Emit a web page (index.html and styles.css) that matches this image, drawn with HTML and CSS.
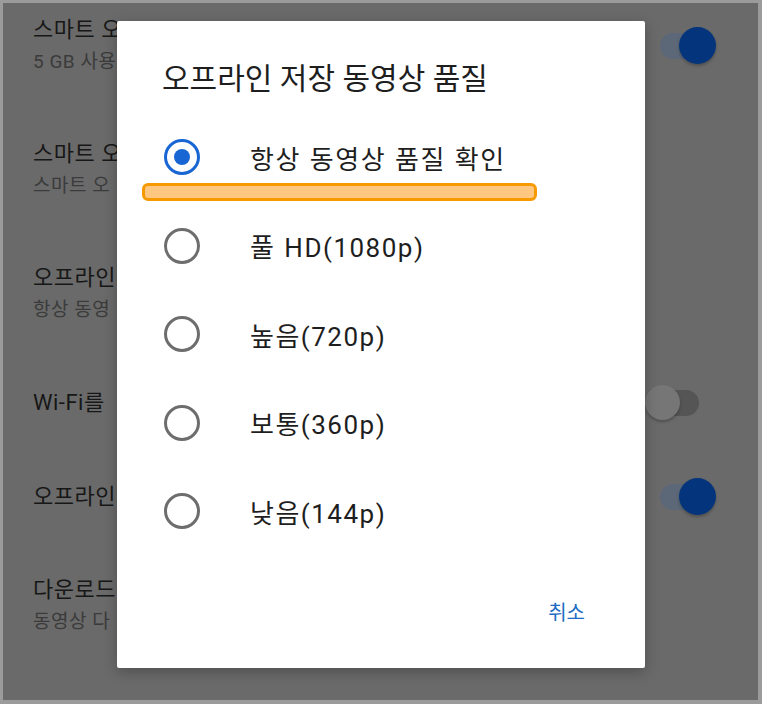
FILE: index.html
```html
<!DOCTYPE html>
<html>
<head>
  <meta charset="utf-8">
  <title>오프라인 저장 동영상 품질</title>
  <link rel="stylesheet" href="styles.css">
</head>
<body>
  <div class="screen">
    <div class="settings">
      <div class="row row-two">
        <div class="row-text">
          <div class="row-title">스마트 오</div>
          <div class="row-sub">5 GB 사용</div>
        </div>
        <div class="toggle on"><span class="knob"></span></div>
      </div>
      <div class="row row-two">
        <div class="row-text">
          <div class="row-title">스마트 오</div>
          <div class="row-sub">스마트 오</div>
        </div>
      </div>
      <div class="row row-two">
        <div class="row-text">
          <div class="row-title">오프라인</div>
          <div class="row-sub">항상 동영</div>
        </div>
      </div>
      <div class="row row-one">
        <div class="row-text">
          <div class="row-title">Wi-Fi를</div>
        </div>
        <div class="toggle off"><span class="knob"></span></div>
      </div>
      <div class="row row-one">
        <div class="row-text">
          <div class="row-title">오프라인</div>
        </div>
        <div class="toggle on"><span class="knob"></span></div>
      </div>
      <div class="row row-two">
        <div class="row-text">
          <div class="row-title">다운로드</div>
          <div class="row-sub">동영상 다</div>
        </div>
      </div>
    </div>

    <div class="dialog">
      <h2 class="dialog-title">오프라인 저장 동영상 품질</h2>
      <ul class="options">
        <li class="option selected"><span class="radio"></span><span class="label">항상 동영상 품질 확인</span></li>
        <li class="option"><span class="radio"></span><span class="label">풀 HD(1080p)</span></li>
        <li class="option"><span class="radio"></span><span class="label">높음(720p)</span></li>
        <li class="option"><span class="radio"></span><span class="label">보통(360p)</span></li>
        <li class="option"><span class="radio"></span><span class="label">낮음(144p)</span></li>
      </ul>
      <div class="actions">
        <button class="cancel">취소</button>
      </div>
      <div class="marker"></div>
    </div>
  </div>
</body>
</html>
```

FILE: styles.css
```css
body {
  margin: 0;
  background-color: #9b9b9b;
  font-family: Roboto, "Noto Sans CJK KR", sans-serif;
}

.screen {
  position: relative;
  width: 755px;
  height: 697px;
  margin: 3px 0 0 3px;
  background-color: #6a6a6a;
  overflow: hidden;
}

.settings {
  margin-top: -19px;
}

.row {
  display: flex;
  align-items: center;
  justify-content: space-between;
  padding: 0 42px 0 30px;
}

.row-two {
  height: 124px;
}

.row-one {
  height: 94px;
}

.row-title {
  font-size: 22px;
  line-height: 32px;
  color: #171717;
  white-space: nowrap;
  letter-spacing: 0.5px;
}

.row-sub {
  font-size: 19px;
  line-height: 32px;
  color: #3b3b3b;
  white-space: nowrap;
  letter-spacing: 0.5px;
}

.toggle {
  position: relative;
  width: 56px;
  height: 26px;
  border-radius: 13px;
  background-color: #5c6878;
}

.toggle .knob {
  position: absolute;
  top: -6px;
  right: 0;
  width: 37px;
  height: 37px;
  border-radius: 50%;
  background-color: #04357c;
  box-shadow: 0 2px 3px rgba(0, 0, 0, 0.25);
}

.toggle.off {
  background-color: #555555;
  width: 54px;
  margin-right: 17px;
}

.toggle.off .knob {
  right: auto;
  left: 0;
  width: 35px;
  height: 35px;
  top: -5px;
  background-color: #767676;
}

.dialog {
  position: absolute;
  left: 114px;
  top: 18px;
  width: 528px;
  height: 647px;
  background-color: #ffffff;
  border-radius: 2px;
  box-shadow: 0 4px 14px rgba(0, 0, 0, 0.25);
}

.dialog-title {
  margin: 0;
  padding: 38px 0 0 45px;
  font-size: 30px;
  font-weight: 400;
  line-height: 40px;
  color: #1e1e1e;
}

.options {
  list-style: none;
  margin: 0;
  padding: 0;
  margin-top: 14px;
}

.option {
  display: flex;
  align-items: center;
  height: 88.5px;
  padding-left: 47px;
}

.radio {
  width: 30px;
  height: 30px;
  border: 3px solid #6d6d6d;
  border-radius: 50%;
  box-sizing: content-box;
  position: relative;
  flex-shrink: 0;
}

.option.selected .radio {
  border-color: #1766d3;
}

.option.selected .radio::after {
  content: "";
  position: absolute;
  left: 7px;
  top: 7px;
  width: 16px;
  height: 16px;
  border-radius: 50%;
  background-color: #1766d3;
}

.label {
  margin-left: 50px;
  font-size: 26px;
  color: #1e1e1e;
  letter-spacing: 1.5px;
  word-spacing: 1px;
}

.actions {
  display: flex;
  justify-content: flex-end;
  padding: 0 60px 0 0;
  margin-top: 41px;
}

.cancel {
  border: none;
  background: none;
  padding: 0;
  font-family: inherit;
  font-size: 20px;
  color: #1b6cc2;
}

.marker {
  position: absolute;
  left: 25px;
  top: 162px;
  width: 389px;
  height: 12px;
  border: 3px solid #f79a00;
  border-radius: 6px;
  background-color: #ffc77f;
}
```
